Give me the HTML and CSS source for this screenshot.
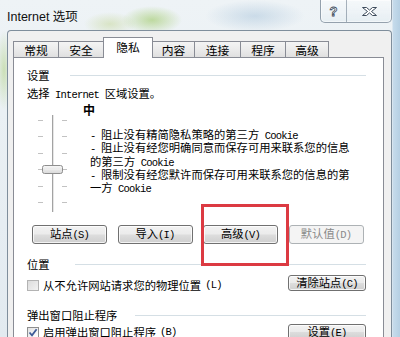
FILE: index.html
```html
<!DOCTYPE html>
<html lang="zh-CN">
<head>
<meta charset="utf-8">
<title>Internet 选项</title>
<link rel="stylesheet" href="styles.css">
</head>
<body>
<div class="window">
  <div class="titlebar">
    <div class="title">Internet 选项</div>
    <div class="caption-btns">
      <div class="cap help">?</div>
      <div class="cap close">
        <svg width="17" height="11" viewBox="0 0 17 11"><path d="M1.5 1.5h4l3 2.6 3-2.6h4l-5 4 5 4h-4l-3-2.6-3 2.6h-4l5-4z" fill="#fff" stroke="#3e4c5c" stroke-width="1" stroke-linejoin="round"/></svg>
      </div>
    </div>
  </div>
  <div class="client">
    <div class="tabs">
      <div class="tab">常规</div>
      <div class="tab">安全</div>
      <div class="tab active">隐私</div>
      <div class="tab">内容</div>
      <div class="tab">连接</div>
      <div class="tab">程序</div>
      <div class="tab">高级</div>
    </div>
    <div class="panel">
      <div class="group g-settings"><span>设置</span></div>
      <div class="hint">选择<span class="lat"> Internet </span>区域设置。</div>
      <div class="slider-row">
        <svg class="slider" width="34" height="100" viewBox="0 0 34 100">
          <g stroke="#c2c2c2" stroke-width="1">
            <line x1="2" y1="6.5" x2="7" y2="6.5"/><line x1="26" y1="6.5" x2="31" y2="6.5"/>
            <line x1="2" y1="22.5" x2="7" y2="22.5"/><line x1="26" y1="22.5" x2="31" y2="22.5"/>
            <line x1="2" y1="39.5" x2="7" y2="39.5"/><line x1="26" y1="39.5" x2="31" y2="39.5"/>
            <line x1="2" y1="55.5" x2="7" y2="55.5"/><line x1="26" y1="55.5" x2="31" y2="55.5"/>
            <line x1="2" y1="72.5" x2="7" y2="72.5"/><line x1="26" y1="72.5" x2="31" y2="72.5"/>
            <line x1="2" y1="88.5" x2="7" y2="88.5"/><line x1="26" y1="88.5" x2="31" y2="88.5"/>
          </g>
          <line x1="16.5" y1="1" x2="16.5" y2="98" stroke="#a3a3a3"/>
          <line x1="17.5" y1="1" x2="17.5" y2="98" stroke="#e6e6e6"/>
          <defs>
            <linearGradient id="thumb" x1="0" y1="0" x2="0" y2="1">
              <stop offset="0" stop-color="#f7f7f7"/>
              <stop offset="1" stop-color="#d9d9d9"/>
            </linearGradient>
          </defs>
          <rect x="6.5" y="51.5" width="20" height="8" rx="2" fill="url(#thumb)" stroke="#8e8e8e"/>
          <line x1="9" y1="55.5" x2="24" y2="55.5" stroke="#ececec"/>
        </svg>
        <div class="desc">
          <div class="level">中</div>
          <div class="bullets">
            <span class="lat">- </span>阻止没有精简隐私策略的第三方<span class="lat"> Cookie</span><br>
            <span class="lat">- </span>阻止没有经您明确同意而保存可用来联系您的信息<br>
            的第三方<span class="lat"> Cookie</span><br>
            <span class="lat">- </span>限制没有经您默许而保存可用来联系您的信息的第<br>
            一方<span class="lat"> Cookie</span>
          </div>
        </div>
      </div>
      <div class="btn-row">
        <button class="btn">站点<span class="lat">(S)</span></button>
        <button class="btn">导入<span class="lat">(I)</span></button>
        <button class="btn">高级<span class="lat">(V)</span></button>
        <button class="btn" disabled>默认值<span class="lat">(D)</span></button>
      </div>
      <div class="group g-loc"><span>位置</span></div>
      <div class="check-row first">
        <label class="check"><span class="box off"></span>从不允许网站请求您的物理位置<span class="lat"> (L)</span></label>
        <button class="btn small">清除站点<span class="lat">(C)</span></button>
      </div>
      <div class="group g-popup"><span>弹出窗口阻止程序</span></div>
      <div class="check-row">
        <label class="check"><span class="box on"><svg width="10" height="9" viewBox="0 0 10 9"><path d="M1.5 4.5l2.5 2.8 4.6-6" fill="none" stroke="#3d5a97" stroke-width="1.8"/></svg></span>启用弹出窗口阻止程序<span class="lat"> (B)</span></label>
        <button class="btn small">设置<span class="lat">(E)</span></button>
      </div>
    </div>
  </div>
</div>
<div class="highlight"></div>
</body>
</html>
```
FILE: styles.css
```css
* { box-sizing: border-box; }

html, body {
  margin: 0;
  padding: 0;
}

body {
  width: 400px;
  height: 337px;
  overflow: hidden;
  position: relative;
  font-family: "Noto Sans CJK SC", sans-serif;
  font-size: 11.3px;
  color: #000;
  background:
    radial-gradient(ellipse 30px 14px at 152px 20px, rgba(150, 196, 88, 0.55), transparent),
    radial-gradient(ellipse 26px 12px at 110px 24px, rgba(196, 214, 150, 0.5), transparent),
    radial-gradient(ellipse 50px 16px at 255px 16px, rgba(160, 190, 215, 0.45), transparent),
    radial-gradient(ellipse 8px 40px at 4px 70px, rgba(170, 205, 120, 0.5), transparent),
    linear-gradient(90deg, transparent 392px, #c6dbeb 393px, #b5cfe3 400px),
    linear-gradient(180deg, #eef3f6 0%, #e2eaf0 100%);
}

.lat {
  font-family: "Liberation Mono", monospace;
  font-size: 10.5px;
  letter-spacing: -0.8px;
}

.window {
  padding: 0 8px 0 7px;
}

.titlebar {
  height: 30px;
  display: flex;
  justify-content: space-between;
  align-items: flex-start;
}

.title {
  font-family: "Liberation Sans", "Noto Sans CJK SC", sans-serif;
  font-size: 12.5px;
  line-height: 16px;
  padding-top: 9px;
  color: #101010;
}

.caption-btns {
  display: flex;
  height: 23px;
  border: 1px solid rgba(70, 90, 110, 0.55);
  border-top: none;
  border-radius: 0 0 5px 5px;
  background: linear-gradient(180deg, rgba(255, 255, 255, 0.45), rgba(220, 232, 240, 0.35));
  box-shadow: inset 0 0 0 1px rgba(255, 255, 255, 0.5);
}

.cap {
  display: flex;
  align-items: center;
  justify-content: center;
}

.help {
  width: 25px;
  font-family: "Liberation Sans", sans-serif;
  font-weight: bold;
  font-size: 13px;
  color: #fff;
  -webkit-text-stroke: 0.8px #3e4c5c;
  padding-top: 1px;
}

.close {
  width: 45px;
  border-left: 1px solid rgba(70, 90, 110, 0.45);
}

.client {
  height: 307px;
  background: #f0f0f0;
  border: 1px solid #7f8e9c;
  border-bottom: none;
  border-radius: 4px 4px 0 0;
  padding: 6px 7px 0 5px;
  display: flex;
  flex-direction: column;
}

.tabs {
  display: flex;
  align-items: flex-end;
  height: 20px;
}

.tab {
  height: 16px;
  margin-left: -1px;
  border: 1px solid #898c95;
  border-bottom: none;
  background: linear-gradient(180deg, #f4f4f4 0%, #ebebeb 50%, #e0e0e0 100%);
  display: flex;
  align-items: center;
  justify-content: center;
  font-size: 11.8px;
  line-height: 14px;
  padding-top: 1px;
}

.tab:nth-child(1) { margin-left: 0; width: 46px; }
.tab:nth-child(2) { width: 46px; }
.tab:nth-child(4) { width: 43px; }
.tab:nth-child(5) { width: 47px; }
.tab:nth-child(6) { width: 46px; }
.tab:nth-child(7) { width: 44px; }

.tab.active {
  width: 50px;
  height: 21px;
  margin-bottom: -1px;
  background: #fff;
  position: relative;
  z-index: 1;
  padding-top: 0;
  padding-bottom: 2px;
}

.panel {
  flex: 1;
  background: #fff;
  border: 1px solid #898c95;
  border-bottom: none;
  padding: 10px 17px 0 13px;
}

.group {
  display: flex;
  align-items: center;
  gap: 20px;
  height: 14px;
  line-height: 14px;
}

.group::after {
  content: "";
  flex: 1;
  height: 1px;
  background: #d5dfe5;
  margin-top: 1px;
}

.g-loc { gap: 25px; margin-top: 13px; }
.g-popup { gap: 18px; margin-top: 16px; }

.hint {
  margin-top: 4px;
  line-height: 14px;
}

.slider-row {
  display: flex;
  margin-top: 2px;
}

.slider {
  display: block;
  margin: 10px 0 0 9px;
  flex: none;
}

.desc {
  margin-left: 13px;
}

.level {
  font-weight: bold;
  font-size: 12px;
  line-height: 12px;
}

.bullets {
  margin: 13px 0 0 7px;
  line-height: 11.3px;
  white-space: nowrap;
}

.btn-row {
  display: flex;
  gap: 10.5px;
  margin: 11px 0 0 5px;
}

.btn {
  width: 75px;
  height: 19px;
  padding: 0;
  margin: 0;
  font-family: "Noto Sans CJK SC", sans-serif;
  font-size: 11.3px;
  line-height: 15px;
  color: #000;
  border: 1px solid #707070;
  border-radius: 3px;
  background: linear-gradient(180deg, #f2f2f2 0%, #ebebeb 48%, #dddddd 52%, #cfcfcf 100%);
  box-shadow: inset 0 0 0 1px rgba(255, 255, 255, 0.75);
}

.btn:disabled {
  border-color: #adb2b5;
  background: #f4f4f4;
  color: #8a8a8a;
  box-shadow: none;
}

.btn.small {
  width: 78px;
  height: 16px;
  line-height: 13px;
}

.check-row {
  display: flex;
  justify-content: space-between;
  align-items: flex-start;
  margin-top: 2px;
}

.check-row.first {
  margin-top: 4px;
}

.check {
  display: flex;
  align-items: center;
  gap: 4px;
  line-height: 13px;
  padding-top: 4px;
}

.check-row:not(.first) .check {
  padding-top: 2px;
}

.box {
  width: 12px;
  height: 11px;
  border: 1px solid #8e8f8f;
  background: linear-gradient(135deg, #e2e2e2, #ffffff);
  display: flex;
  align-items: center;
  justify-content: center;
  flex: none;
}

.box.off {
  border-color: #b3b3b3;
  background: linear-gradient(135deg, #dcdcdc, #f2f2f2);
}

.box svg {
  display: block;
}

.highlight {
  position: absolute;
  left: 201px;
  top: 204px;
  width: 88px;
  height: 62px;
  border: 3px solid #dc3a42;
}
```
